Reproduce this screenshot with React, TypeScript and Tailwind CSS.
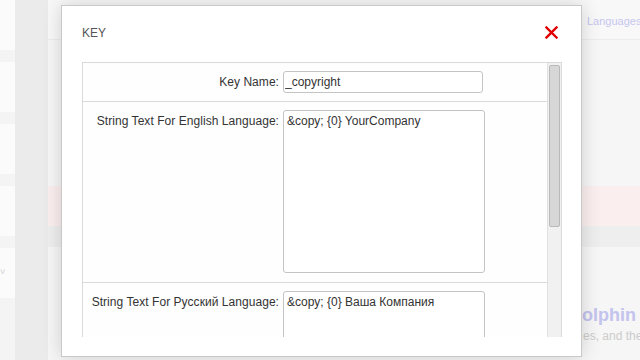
import React from 'react';

const font = { fontFamily: '"Liberation Sans", Arial, sans-serif' };

const rows = [
  { label: 'Key Name:', value: '_copyright', multiline: false },
  { label: 'String Text For English Language:', value: '&copy; {0} YourCompany', multiline: true },
  { label: 'String Text For Русский Language:', value: '&copy; {0} Ваша Компания', multiline: true },
];

const CloseIcon = () => (
  <svg width="13" height="13" viewBox="0 0 13 13" className="block">
    <path d="M1.5 1.5 L11.5 11.5 M11.5 1.5 L1.5 11.5" stroke="#e00000" strokeWidth="2.4" strokeLinecap="square" />
  </svg>
);

export default function App() {
  return (
    <div className="relative flex h-[360px] w-[640px] overflow-hidden bg-[#f4f4f4]" style={font}>
      {/* page behind the dialog */}
      <div className="flex w-[15px] shrink-0 flex-col gap-[12px]">
        {[0, 1, 2, 3, 4].map((i) => (
          <div key={i} className="relative h-[50px] bg-[#fbfbfb]">
            {i === 4 && <span className="absolute left-0 top-[18px] text-[9px] text-[#cfcfcf]">˅</span>}
          </div>
        ))}
      </div>
      <div className="w-[33px] shrink-0 bg-[#ebebeb]" />
      <div className="flex min-w-0 flex-1 flex-col bg-[#f6f6f6]">
        <div className="flex h-[40px] items-start border-b border-[#ececec] bg-[#f8f8f8] pl-[539px] pt-[14px]">
          <span className="whitespace-nowrap text-[11px] leading-[14px] text-[#c6c6ef]">Languages</span>
        </div>
        <div className="h-[146px]" />
        <div className="h-[40px] bg-[#fbeeee]" />
        <div className="h-[21px] bg-[#eeeeee]" />
        <div className="pl-[521px] pt-[57px]">
          <div className="whitespace-nowrap text-[18px] font-bold leading-[22px] text-[#c3c3ee]">Dolphin</div>
          <div className="mt-[3px] whitespace-nowrap pl-[14px] text-[12px] leading-[14px] text-[#cccccc]">es, and the</div>
        </div>
      </div>

      {/* dialog */}
      <div className="absolute left-[61px] top-[5px] flex h-[352px] w-[521px] flex-col border border-[#c9c9c9] bg-white shadow-[0_0_18px_rgba(0,0,0,0.16)]">
        <div className="flex items-start justify-between pl-[20px] pr-[23px] pt-[20px]">
          <span className="text-[12px] leading-[14px] text-[#555555]">KEY</span>
          <CloseIcon />
        </div>
        <div className="ml-[20px] mt-[22px] flex h-[275px] w-[480px] border-l border-r border-t border-[#d9d9d9] bg-[#fefefe]">
          <div className="flex-1 overflow-hidden">
            {rows.map((row) => (
              <div key={row.label} className="flex gap-[4px] border-b border-[#dadada] pb-[8px] pt-[8px] last:border-b-0 [&:nth-child(2)]:pb-[9px]">
                <div className="w-[196px] whitespace-nowrap pt-[4px] text-right text-[12px] leading-[14px] tracking-[0.05px] text-[#333333]">
                  {row.label}
                </div>
                {row.multiline ? (
                  <textarea
                    readOnly
                    value={row.value}
                    className="h-[163px] w-[202px] resize-none rounded-[3px] border border-[#c4c4c4] bg-white p-[3px] text-[12px] leading-[14px] text-[#333333] outline-none"
                    style={font}
                  />
                ) : (
                  <input
                    readOnly
                    value={row.value}
                    className="h-[22px] w-[200px] rounded-[3px] border border-[#c4c4c4] bg-white px-[1px] text-[12px] text-[#333333] outline-none"
                    style={font}
                  />
                )}
              </div>
            ))}
          </div>
          <div className="flex w-[14px] flex-col border-l border-[#e0e0e0] bg-[#f1f1f1] px-[1px] pt-[2px]">
            <div className="h-[162px] rounded-[2px] border border-[#b9b9b9] bg-[#d7d7d7]" />
          </div>
        </div>
      </div>
    </div>
  );
}
